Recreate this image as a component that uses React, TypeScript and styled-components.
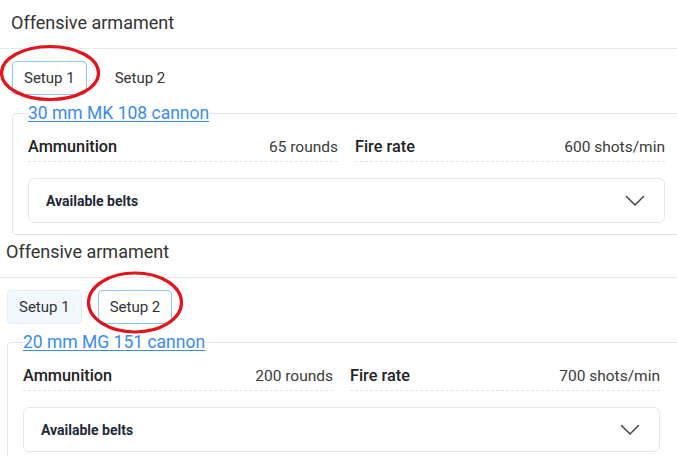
import styled, { createGlobalStyle } from 'styled-components';

const GlobalStyle = createGlobalStyle`
  body {
    margin: 0;
    background: #fff;
    font-family: Roboto, "Liberation Sans", Arial, sans-serif;
    overflow: hidden;
  }
`;

type TabState = 'active' | 'hover' | 'idle';

interface Weapon {
  name: string;
  rounds: string;
  rate: string;
}

function ArmamentPanel({ weapon, tabs, shift, padTop, height }: {
  weapon: Weapon;
  tabs: TabState[];
  shift: number;
  padTop: number;
  height: number;
}) {
  return (
    <Section $shift={shift} $padTop={padTop} $height={height}>
      <Title>Offensive armament</Title>
      <Divider />
      <Inner>
        <TabRow>
          {tabs.map((state, i) => (
            <Tab key={i} $state={state}>Setup {i + 1}</Tab>
          ))}
        </TabRow>
        <Card>
          <Legend><WeaponLink href="#">{weapon.name}</WeaponLink></Legend>
          <Stats>
            <Stat>
              <Label>Ammunition</Label>
              <Value>{weapon.rounds}</Value>
            </Stat>
            <Stat>
              <Label>Fire rate</Label>
              <Value>{weapon.rate}</Value>
            </Stat>
          </Stats>
          <Accordion>
            <span>Available belts</span>
            <svg width="20" height="12" viewBox="0 0 20 12">
              <polyline points="1.5,1.5 10,10 18.5,1.5" fill="none" stroke="#444" strokeWidth="1.5" strokeLinecap="round" strokeLinejoin="round" />
            </svg>
          </Accordion>
        </Card>
      </Inner>
    </Section>
  );
}

export default function App() {
  return (
    <Page>
      <GlobalStyle />
      <ArmamentPanel
        weapon={{ name: '30 mm MK 108 cannon', rounds: '65 rounds', rate: '600 shots/min' }}
        tabs={['active', 'idle']}
        shift={12}
        padTop={10}
        height={236}
      />
      <ArmamentPanel
        weapon={{ name: '20 mm MG 151 cannon', rounds: '200 rounds', rate: '700 shots/min' }}
        tabs={['hover', 'active']}
        shift={7}
        padTop={3}
        height={220}
      />
      <Marks width="677" height="468" viewBox="0 0 677 468">
        <ellipse cx="50" cy="73" rx="48.5" ry="26.5" fill="none" stroke="#e3141b" strokeWidth="3.2" />
        <ellipse cx="135" cy="302.5" rx="46.5" ry="29.5" fill="none" stroke="#e3141b" strokeWidth="3.2" />
      </Marks>
    </Page>
  );
}

const Page = styled.div`
  position: relative;
  width: 677px;
  height: 468px;
  overflow: hidden;
`;

const Section = styled.section<{ $shift: number; $padTop: number; $height: number }>`
  box-sizing: border-box;
  height: ${p => p.$height}px;
  padding-top: ${p => p.$padTop}px;
  overflow: hidden;

  & > h2 {
    margin-left: ${p => p.$shift - 1}px;
  }
  & > div {
    margin-left: ${p => p.$shift}px;
  }
`;

const Title = styled.h2`
  margin: 0;
  font-size: 18px;
  line-height: 26px;
  font-weight: 400;
  color: #333;
`;

const Divider = styled.hr`
  margin: 12px 0 0;
  border: none;
  border-top: 1px solid #e8e8e8;
  width: 100%;
`;

const Inner = styled.div`
  width: 675px;
`;

const TabRow = styled.div`
  display: flex;
  gap: 16px;
  margin-top: 12px;
`;

const Tab = styled.button<{ $state: TabState }>`
  box-sizing: border-box;
  height: 34px;
  padding: 0 11px;
  font-family: inherit;
  font-size: 15px;
  color: #333;
  border-radius: 4px;
  cursor: pointer;
  border: 1px solid
    ${p => (p.$state === 'active' ? '#8cc5f7' : p.$state === 'hover' ? '#e3eefa' : 'transparent')};
  background: ${p => (p.$state === 'hover' ? '#f2f8ff' : '#fff')};
`;

const Card = styled.fieldset`
  box-sizing: border-box;
  margin: 8px 0 0;
  padding: 0 21px 11px 15px;
  border: 1px solid #e5e5e5;
  border-radius: 4px;
  min-width: 0;
`;

const Legend = styled.legend`
  padding: 0;
  line-height: 20px;
`;

const WeaponLink = styled.a`
  font-size: 17.5px;
  color: #3a8bf0;
  text-decoration: underline;
  text-underline-offset: 2px;
`;

const Stats = styled.div`
  display: grid;
  grid-template-columns: 1fr 1fr;
  column-gap: 17px;
  margin-top: 13px;
`;

const Stat = styled.div`
  display: flex;
  justify-content: space-between;
  align-items: center;
  padding-bottom: 4px;
  border-bottom: 1px dashed #e2e2e2;
  line-height: 20px;
`;

const Label = styled.span`
  font-size: 16.3px;
  font-weight: 500;
  color: #222;
`;

const Value = styled.span`
  font-size: 15.5px;
  color: #3a3a3a;
`;

const Accordion = styled.div`
  box-sizing: border-box;
  display: flex;
  justify-content: space-between;
  align-items: center;
  height: 45px;
  margin-top: 16px;
  padding: 0 19px 0 17px;
  border: 1px solid #e5e7eb;
  border-radius: 6px;
  font-size: 14px;
  font-weight: 700;
  color: #1f2937;
`;

const Marks = styled.svg`
  position: absolute;
  left: 0;
  top: 0;
  pointer-events: none;
`;
